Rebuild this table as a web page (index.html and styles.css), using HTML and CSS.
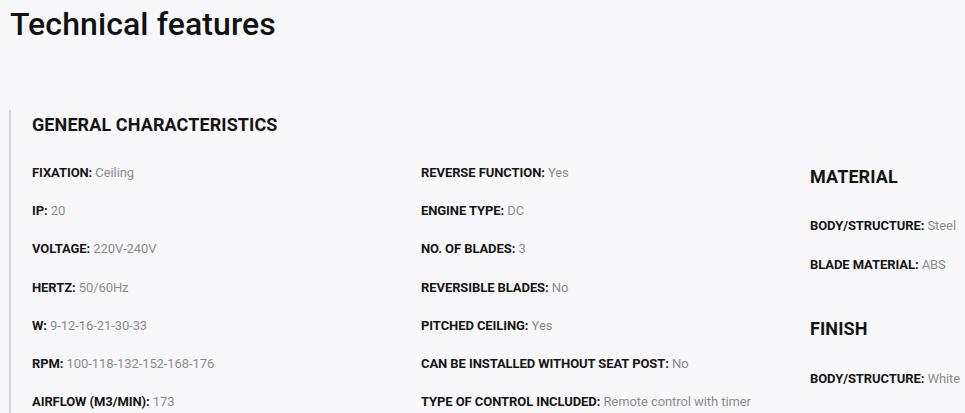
FILE: index.html
```html
<!DOCTYPE html>
<html lang="en">
<head>
<meta charset="utf-8">
<title>Technical features</title>
<link rel="stylesheet" href="styles.css">
</head>
<body>
<h1 class="title">Technical features</h1>
<section class="features">
  <h2 class="group-title">GENERAL CHARACTERISTICS</h2>
  <div class="grid">
    <ul class="col">
      <li class="item"><b>FIXATION:</b> Ceiling</li>
      <li class="item"><b>IP:</b> 20</li>
      <li class="item"><b>VOLTAGE:</b> 220V-240V</li>
      <li class="item"><b>HERTZ:</b> 50/60Hz</li>
      <li class="item"><b>W:</b> 9-12-16-21-30-33</li>
      <li class="item"><b>RPM:</b> 100-118-132-152-168-176</li>
      <li class="item"><b>AIRFLOW (M3/MIN):</b> 173</li>
    </ul>
    <ul class="col">
      <li class="item"><b>REVERSE FUNCTION:</b> Yes</li>
      <li class="item"><b>ENGINE TYPE:</b> DC</li>
      <li class="item"><b>NO. OF BLADES:</b> 3</li>
      <li class="item"><b>REVERSIBLE BLADES:</b> No</li>
      <li class="item"><b>PITCHED CEILING:</b> Yes</li>
      <li class="item"><b>CAN BE INSTALLED WITHOUT SEAT POST:</b> No</li>
      <li class="item"><b>TYPE OF CONTROL INCLUDED:</b> Remote control with timer</li>
    </ul>
    <div class="col side">
      <h3 class="side-title">MATERIAL</h3>
      <ul class="side-list">
        <li class="item"><b>BODY/STRUCTURE:</b> Steel</li>
        <li class="item"><b>BLADE MATERIAL:</b> ABS</li>
      </ul>
      <h3 class="side-title finish">FINISH</h3>
      <ul class="side-list">
        <li class="item"><b>BODY/STRUCTURE:</b> White</li>
      </ul>
    </div>
  </div>
</section>
</body>
</html>
```

FILE: styles.css
```css
html, body {
  margin: 0;
  padding: 0;
  background: #f8f8fa;
  font-family: Roboto, "Liberation Sans", sans-serif;
  color: #111;
  overflow: hidden;
}

.title {
  margin: 0;
  padding: 6px 0 0 10px;
  height: 110px;
  box-sizing: border-box;
  font-size: 32px;
  font-weight: 500;
  line-height: 36px;
  letter-spacing: 0.1px;
  color: #111;
}

.features {
  margin-left: 9px;
  border-left: 2px solid #d4d4d6;
  padding-left: 21px;
  padding-top: 5px;
}

.group-title {
  margin: 0;
  font-size: 18px;
  font-weight: 700;
  line-height: 20px;
  height: 39px;
  letter-spacing: 0.1px;
  color: #151515;
}

.grid {
  display: grid;
  grid-template-columns: 389px 389px 1fr;
}

.col {
  list-style: none;
  margin: 0;
  padding: 0;
}

.item {
  font-size: 13px;
  line-height: 38px;
  height: 38.2px;
  color: #8c8c8c;
  letter-spacing: -0.08px;
  white-space: nowrap;
}

.item b {
  color: #151515;
  font-weight: 700;
}

.side-title {
  box-sizing: border-box;
  margin: 0;
  font-size: 18px;
  font-weight: 700;
  line-height: 20px;
  padding-top: 13px;
  height: 52px;
  color: #151515;
  letter-spacing: 0.1px;
}

.finish {
  padding-top: 35px;
  height: 75px;
}

.side-list {
  list-style: none;
  margin: 0;
  padding: 0;
}

.side-list .item {
  height: 39px;
  line-height: 39px;
}
```
